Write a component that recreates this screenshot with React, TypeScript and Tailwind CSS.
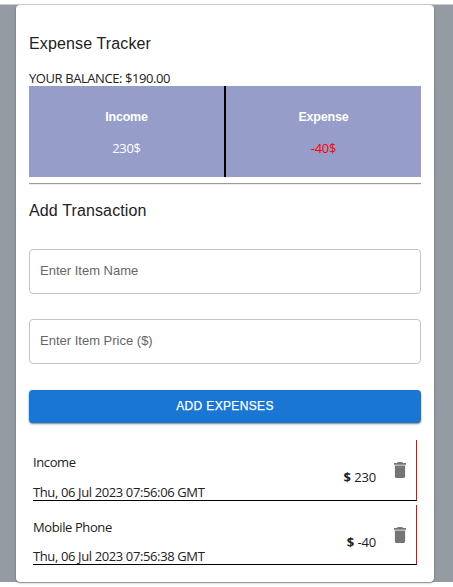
import React from "react";

const sans = "font-['Liberation_Sans',Arial,sans-serif]";

type Item = { name: string; date: string; amount: string; height: string; dateGap: string };

const items: Item[] = [
  { name: "Income", date: "Thu, 06 Jul 2023 07:56:06 GMT", amount: "230", height: "h-[61px]", dateGap: "mt-3" },
  { name: "Mobile Phone", date: "Thu, 06 Jul 2023 07:56:38 GMT", amount: "-40", height: "h-[60px]", dateGap: "mt-[11px]" },
];

function TrashIcon() {
  return (
    <svg viewBox="5 3 14 18" className="h-4 w-3" fill="#757575" preserveAspectRatio="none">
      <path d="M6 19c0 1.1.9 2 2 2h8c1.1 0 2-.9 2-2V7H6v12zM19 4h-3.5l-1-1h-5l-1 1H5v2h14V4z" />
    </svg>
  );
}

function Field({ label }: { label: string }) {
  return (
    <div className={`flex h-[45px] items-center rounded border border-[#c4c4c4] pb-[2px] pl-[10px] text-[13px] text-[#666] ${sans}`}>
      <span>{label}</span>
    </div>
  );
}

function Row({ item }: { item: Item }) {
  return (
    <li className={`flex justify-between border-r border-b border-r-[#ff0000] border-b-black ${item.height}`}>
      <div className="flex flex-col pt-[13px]">
        <span className="h-[18px] leading-[18px] tracking-[-0.4px]">{item.name}</span>
        <span className={`h-[18px] leading-[18px] tracking-[-0.38px] ${item.dateGap}`}>{item.date}</span>
      </div>
      <div className="flex pr-[10px]">
        <span className="pt-[28px] leading-[18px] tracking-[-0.15px]">
          <b>$</b> {item.amount}
        </span>
        <button className="mt-[22px] ml-[18px] h-4 w-3" aria-label="Delete">
          <TrashIcon />
        </button>
      </div>
    </li>
  );
}

export default function App() {
  return (
    <div className="h-[587px] w-[453px] overflow-hidden bg-white pt-1 font-['Open_Sans','Noto_Sans',sans-serif] text-[13px] whitespace-nowrap text-[#212121]">
      <div className="h-[578px] border-t border-[#cccccc] bg-[#949ba3] pl-4">
        <main className="flex h-[577px] w-[418px] flex-col rounded bg-white px-[13px] shadow-[0_1px_1px_rgba(0,0,0,0.35),0_1px_3px_rgba(0,0,0,0.2)]">
          <h1 className={`mt-[29px] h-5 text-base leading-5 tracking-[0.13px] ${sans}`}>Expense Tracker</h1>
          <p className="mt-[15px] h-[17px] text-[13px] leading-[18px] tracking-[-0.42px]">YOUR BALANCE: $190.00</p>
          <section className="flex h-[91px] bg-[#959dc8] text-center text-white">
            <div className="w-[197px] border-r-2 border-black pt-[22px]">
              <h2 className={`h-[18px] text-[12.5px] leading-[18px] font-bold tracking-[-0.2px] ${sans}`}>Income</h2>
              <p className="mt-[13px] leading-[18px] tracking-[-0.3px]">230$</p>
            </div>
            <div className="flex-1 pt-[22px]">
              <h2 className={`h-[18px] text-[12.5px] leading-[18px] font-bold tracking-[-0.2px] ${sans}`}>Expense</h2>
              <p className="mt-[13px] leading-[18px] tracking-[-0.3px] text-[#ff0000]">-40$</p>
            </div>
          </section>
          <hr className="mt-[6px] h-[2px] border-t border-b border-t-[#9a9a9a] border-b-[#eeeeee]" />
          <h1 className={`mt-4 h-5 text-base leading-5 tracking-[0.13px] ${sans}`}>Add Transaction</h1>
          <div className="mt-[28px] flex flex-col gap-[25px]">
            <Field label="Enter Item Name" />
            <Field label="Enter Item Price ($)" />
          </div>
          <button className={`mt-[26px] h-[33px] shrink-0 rounded bg-[#1976d2] pb-px text-[12px] font-medium tracking-[0.35px] text-white shadow-[0_1px_2px_rgba(0,0,0,0.5)] [-webkit-text-stroke:0.25px_white] ${sans}`}>
            ADD EXPENSES
          </button>
          <ul className="mt-[17px] flex flex-col gap-1 px-1">
            {items.map((item) => (
              <Row key={item.name} item={item} />
            ))}
          </ul>
        </main>
      </div>
    </div>
  );
}
